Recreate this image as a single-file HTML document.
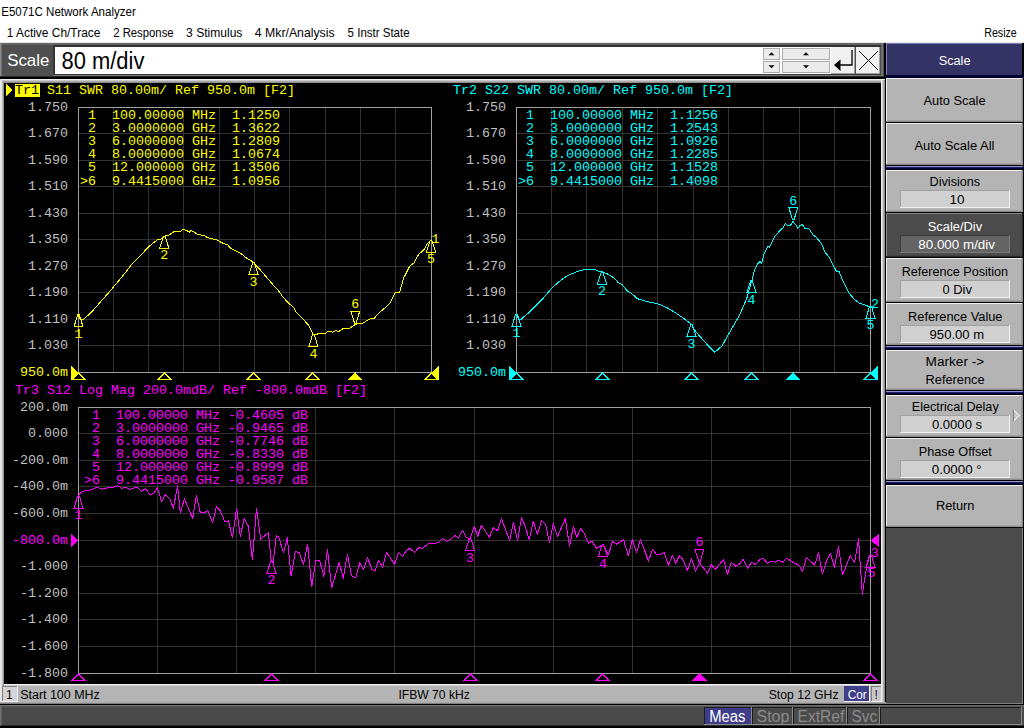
<!DOCTYPE html>
<html><head><meta charset="utf-8"><title>E5071C</title>
<style>
html,body{margin:0;padding:0;width:1024px;height:728px;overflow:hidden;background:#fff;}
svg{display:block;}
text{white-space:pre;}
</style></head><body>
<svg width="1024" height="728" viewBox="0 0 1024 728" shape-rendering="crispEdges">
<rect x="0" y="0" width="1024" height="43" fill="#ffffff" />
<text x="1.2" y="15.7" font-family="'Liberation Sans', sans-serif" font-size="12" fill="#000" text-anchor="start" textLength="134.6" lengthAdjust="spacingAndGlyphs" >E5071C Network Analyzer</text>
<text x="6.7" y="36.6" font-family="'Liberation Sans', sans-serif" font-size="12" fill="#000" text-anchor="start" textLength="93.7" lengthAdjust="spacingAndGlyphs" >1 Active Ch/Trace</text>
<text x="113.2" y="36.6" font-family="'Liberation Sans', sans-serif" font-size="12" fill="#000" text-anchor="start" textLength="60.4" lengthAdjust="spacingAndGlyphs" >2 Response</text>
<text x="186.1" y="36.6" font-family="'Liberation Sans', sans-serif" font-size="12" fill="#000" text-anchor="start" textLength="56.3" lengthAdjust="spacingAndGlyphs" >3 Stimulus</text>
<text x="254.79999999999998" y="36.6" font-family="'Liberation Sans', sans-serif" font-size="12" fill="#000" text-anchor="start" textLength="79.8" lengthAdjust="spacingAndGlyphs" >4 Mkr/Analysis</text>
<text x="347.59999999999997" y="36.6" font-family="'Liberation Sans', sans-serif" font-size="12" fill="#000" text-anchor="start" textLength="62.0" lengthAdjust="spacingAndGlyphs" >5 Instr State</text>
<text x="984.2" y="36.6" font-family="'Liberation Sans', sans-serif" font-size="12" fill="#000" text-anchor="start" textLength="32.6" lengthAdjust="spacingAndGlyphs" >Resize</text>
<rect x="0" y="42" width="1024" height="1" fill="#e6e6e6" />
<rect x="0" y="43" width="885" height="34" fill="#4f4f4f" />
<rect x="0" y="43" width="885" height="1" fill="#686868" />
<rect x="0" y="44" width="885" height="1" fill="#626262" />
<rect x="0" y="43" width="1" height="34" fill="#8a8a8a" />
<rect x="1" y="43" width="1" height="34" fill="#707070" />
<rect x="53" y="45" width="831" height="2" fill="#333333" />
<rect x="53" y="45" width="2" height="30" fill="#333333" />
<rect x="53" y="74" width="831" height="1" fill="#3a3a3a" />
<rect x="53" y="75" width="831" height="1" fill="#7a7a7a" />
<rect x="881" y="45" width="1" height="31" fill="#6a6a6a" />
<rect x="882" y="45" width="1" height="31" fill="#7a7a7a" />
<text x="7.2" y="65.8" font-family="'Liberation Sans', sans-serif" font-size="17" fill="#ffffff" text-anchor="start" textLength="42.2" lengthAdjust="spacingAndGlyphs" >Scale</text>
<rect x="55" y="47" width="776" height="27" fill="#ffffff" />
<text x="61.5" y="69" font-family="'Liberation Sans', sans-serif" font-size="23" fill="#000" text-anchor="start" textLength="82.9" lengthAdjust="spacingAndGlyphs" >80 m/div</text>
<rect x="763.5" y="48.5" width="16" height="10.5" fill="#ebebeb" stroke="#ababab" stroke-width="1"/>
<polygon points="768.5,55.25 774.5,55.25 771.5,52.25" fill="#000" shape-rendering="geometricPrecision"/>
<rect x="763.5" y="61.5" width="16" height="10.5" fill="#ebebeb" stroke="#ababab" stroke-width="1"/>
<polygon points="768.5,65.25 774.5,65.25 771.5,68.25" fill="#000" shape-rendering="geometricPrecision"/>
<rect x="782.5" y="48.5" width="47" height="10.5" fill="#ebebeb" stroke="#ababab" stroke-width="1"/>
<polygon points="803.0,55.25 809.0,55.25 806.0,52.25" fill="#000" shape-rendering="geometricPrecision"/>
<rect x="782.5" y="61.5" width="47" height="10.5" fill="#ebebeb" stroke="#ababab" stroke-width="1"/>
<polygon points="803.0,65.25 809.0,65.25 806.0,68.25" fill="#000" shape-rendering="geometricPrecision"/>
<rect x="831" y="47" width="24" height="27" fill="#f0f0f0" />
<rect x="854" y="47" width="1" height="27" fill="#a0a0a0" />
<rect x="831" y="73" width="24" height="1" fill="#a0a0a0" />
<path d="M852 50 V65 H839" stroke="#000" stroke-width="1.3" fill="none" shape-rendering="geometricPrecision"/>
<polygon points="834,65 840.5,59.5 840.5,71" fill="#000" shape-rendering="geometricPrecision"/>
<rect x="856" y="47" width="24" height="27" fill="#f0f0f0" />
<rect x="879" y="47" width="1" height="27" fill="#a0a0a0" />
<rect x="856" y="73" width="24" height="1" fill="#a0a0a0" />
<path d="M859 51 L878 70 M878 51 L859 70" stroke="#000" stroke-width="1" fill="none" shape-rendering="geometricPrecision"/>
<rect x="0" y="76" width="885" height="1" fill="#2a2a2a" />
<rect x="0" y="77" width="885" height="1" fill="#000000" />
<rect x="0" y="78" width="885" height="1" fill="#000000" />
<rect x="884" y="43" width="1" height="662" fill="#000000" />
<rect x="885" y="43" width="1" height="662" fill="#000000" />
<rect x="0" y="79" width="885" height="626" fill="#b4b4b4" />
<rect x="0" y="79" width="885" height="1" fill="#f0f0f0" />
<rect x="2" y="80" width="883" height="1" fill="#c8c8c8" />
<rect x="3" y="81" width="882" height="1" fill="#a8a8a8" />
<rect x="3" y="82" width="882" height="1" fill="#909090" />
<rect x="0" y="79" width="1" height="625" fill="#e8e8e8" />
<rect x="1" y="79" width="1" height="625" fill="#e0e0e0" />
<rect x="2" y="80" width="1" height="624" fill="#c0c0c0" />
<rect x="3" y="81" width="1" height="623" fill="#909090" />
<rect x="4" y="83" width="877" height="601" fill="#000000" />
<rect x="881" y="80" width="1" height="623" fill="#f0f0f0" />
<rect x="882" y="80" width="1" height="623" fill="#d0d0d0" />
<rect x="883" y="80" width="1" height="623" fill="#b0b0b0" />
<rect x="884" y="80" width="1" height="623" fill="#909090" />
<rect x="4" y="684" width="877" height="1" fill="#f0f0f0" />
<rect x="4" y="685" width="877" height="18" fill="#b4b4b4" />
<rect x="4" y="685" width="877" height="1" fill="#d0d0d0" />
<rect x="0" y="702" width="886" height="1" fill="#a8a8a8" />
<rect x="0" y="703" width="886" height="1" fill="#808080" />
<rect x="0" y="704" width="886" height="1" fill="#000000" />
<rect x="2" y="686" width="15" height="15" fill="#d4d4d4" />
<rect x="2" y="686" width="15" height="1" fill="#808080" />
<rect x="2" y="686" width="1" height="15" fill="#808080" />
<rect x="2" y="701" width="16" height="1" fill="#f0f0f0" />
<rect x="17" y="686" width="1" height="16" fill="#f0f0f0" />
<text x="6" y="698.5" font-family="'Liberation Sans', sans-serif" font-size="12" fill="#000" text-anchor="start" >1</text>
<text x="20.2" y="698.5" font-family="'Liberation Sans', sans-serif" font-size="12" fill="#000" text-anchor="start" textLength="79.6" lengthAdjust="spacingAndGlyphs" >Start 100 MHz</text>
<text x="398.5" y="698.6" font-family="'Liberation Sans', sans-serif" font-size="12" fill="#000" text-anchor="start" textLength="71.3" lengthAdjust="spacingAndGlyphs" >IFBW 70 kHz</text>
<text x="768.7" y="698.6" font-family="'Liberation Sans', sans-serif" font-size="12" fill="#000" text-anchor="start" textLength="69.8" lengthAdjust="spacingAndGlyphs" >Stop 12 GHz</text>
<rect x="844" y="686" width="25" height="15" fill="#3f3f8a" />
<rect x="844" y="701" width="26" height="1" fill="#f0f0f0" />
<rect x="869" y="686" width="1" height="16" fill="#f0f0f0" />
<text x="847.7" y="698.6" font-family="'Liberation Sans', sans-serif" font-size="12" fill="#ffffff" text-anchor="start" textLength="19.1" lengthAdjust="spacingAndGlyphs" >Cor</text>
<rect x="871" y="686" width="11" height="16" fill="#c8c8c8" />
<rect x="871" y="686" width="10" height="1" fill="#808080" />
<rect x="871" y="686" width="1" height="16" fill="#808080" />
<rect x="871" y="701" width="11" height="1" fill="#f0f0f0" />
<rect x="881" y="686" width="1" height="16" fill="#f0f0f0" />
<text x="874.5" y="698.6" font-family="'Liberation Sans', sans-serif" font-size="12" fill="#400040" text-anchor="start" >!</text>
<rect x="0" y="705" width="1024" height="23" fill="#4a4a4a" />
<rect x="0" y="705" width="1024" height="1" fill="#6e6e6e" />
<rect x="0" y="706" width="1024" height="1" fill="#5a5a5a" />
<rect x="0" y="725" width="1024" height="1" fill="#2a2a2a" />
<rect x="0" y="705" width="1" height="21" fill="#6e6e6e" />
<rect x="1" y="706" width="1" height="19" fill="#5e5e5e" />
<rect x="0" y="726" width="1024" height="1" fill="#000000" />
<rect x="0" y="727" width="1024" height="1" fill="#000000" />
<rect x="704" y="707" width="48" height="18" fill="#3d3d8a" />
<rect x="704" y="707" width="48" height="1" fill="#1a1a1a" />
<rect x="704" y="707" width="1" height="18" fill="#1a1a1a" />
<rect x="704" y="724" width="48" height="1" fill="#8a8a8a" />
<rect x="751" y="707" width="1" height="18" fill="#8a8a8a" />
<rect x="752" y="707" width="41" height="18" fill="#4a4a4a" />
<rect x="752" y="707" width="41" height="1" fill="#1a1a1a" />
<rect x="752" y="707" width="1" height="18" fill="#1a1a1a" />
<rect x="752" y="724" width="41" height="1" fill="#8a8a8a" />
<rect x="792" y="707" width="1" height="18" fill="#8a8a8a" />
<rect x="793" y="707" width="54" height="18" fill="#4a4a4a" />
<rect x="793" y="707" width="54" height="1" fill="#1a1a1a" />
<rect x="793" y="707" width="1" height="18" fill="#1a1a1a" />
<rect x="793" y="724" width="54" height="1" fill="#8a8a8a" />
<rect x="846" y="707" width="1" height="18" fill="#8a8a8a" />
<rect x="847" y="707" width="33" height="18" fill="#4a4a4a" />
<rect x="847" y="707" width="33" height="1" fill="#1a1a1a" />
<rect x="847" y="707" width="1" height="18" fill="#1a1a1a" />
<rect x="847" y="724" width="33" height="1" fill="#8a8a8a" />
<rect x="879" y="707" width="1" height="18" fill="#8a8a8a" />
<rect x="880" y="707" width="142" height="18" fill="#4a4a4a" />
<rect x="880" y="707" width="142" height="1" fill="#1a1a1a" />
<rect x="880" y="707" width="1" height="18" fill="#1a1a1a" />
<rect x="880" y="724" width="142" height="1" fill="#8a8a8a" />
<rect x="1021" y="707" width="1" height="18" fill="#8a8a8a" />
<text x="709.2" y="721.7" font-family="'Liberation Sans', sans-serif" font-size="16" fill="#ffffff" text-anchor="start" textLength="36.3" lengthAdjust="spacingAndGlyphs" >Meas</text>
<text x="756.5" y="721.6" font-family="'Liberation Sans', sans-serif" font-size="16" fill="#8a8a8a" text-anchor="start" textLength="32.8" lengthAdjust="spacingAndGlyphs" >Stop</text>
<text x="797.5" y="721.6" font-family="'Liberation Sans', sans-serif" font-size="16" fill="#8a8a8a" text-anchor="start" textLength="46.7" lengthAdjust="spacingAndGlyphs" >ExtRef</text>
<text x="851.5" y="721.6" font-family="'Liberation Sans', sans-serif" font-size="16" fill="#8a8a8a" text-anchor="start" textLength="25.6" lengthAdjust="spacingAndGlyphs" >Svc</text>
<rect x="886" y="43" width="138" height="662" fill="#000000" />
<rect x="886" y="43" width="136" height="32" fill="#333366" />
<rect x="886" y="43" width="136" height="1" fill="#8080b8" />
<rect x="886" y="43" width="1" height="32" fill="#8080b8" />
<rect x="886" y="75" width="138" height="3" fill="#000033" />
<text x="954.6" y="65.1" font-family="'Liberation Sans', sans-serif" font-size="12" fill="#ffffff" text-anchor="middle" textLength="31.9" lengthAdjust="spacingAndGlyphs" >Scale</text>
<rect x="886" y="78" width="137" height="44" fill="#b4b4b4" />
<rect x="886" y="78" width="137" height="1" fill="#f0f0f0" />
<rect x="886" y="78" width="1" height="44" fill="#f0f0f0" />
<rect x="886" y="121" width="137" height="1" fill="#8c8c8c" />
<rect x="887" y="120" width="136" height="1" fill="#a0a0a0" />
<rect x="1022" y="78" width="1" height="44" fill="#8c8c8c" />
<rect x="1021" y="79" width="1" height="43" fill="#a0a0a0" />
<text x="923.5" y="104.7" font-family="'Liberation Sans', sans-serif" font-size="12" fill="#000" text-anchor="start" textLength="62.1" lengthAdjust="spacingAndGlyphs" >Auto Scale</text>
<rect x="886" y="123" width="137" height="42" fill="#b4b4b4" />
<rect x="886" y="123" width="137" height="1" fill="#f0f0f0" />
<rect x="886" y="123" width="1" height="42" fill="#f0f0f0" />
<rect x="886" y="164" width="137" height="1" fill="#8c8c8c" />
<rect x="887" y="163" width="136" height="1" fill="#a0a0a0" />
<rect x="1022" y="123" width="1" height="42" fill="#8c8c8c" />
<rect x="1021" y="124" width="1" height="41" fill="#a0a0a0" />
<text x="914.4000000000001" y="149.9" font-family="'Liberation Sans', sans-serif" font-size="12" fill="#000" text-anchor="start" textLength="80.0" lengthAdjust="spacingAndGlyphs" >Auto Scale All</text>
<rect x="886" y="166" width="137" height="1" fill="#9090d0" />
<rect x="886" y="167" width="137" height="1" fill="#202060" />
<rect x="886" y="168" width="137" height="1" fill="#000040" />
<rect x="886" y="170" width="137" height="42" fill="#b4b4b4" />
<rect x="886" y="170" width="137" height="1" fill="#f0f0f0" />
<rect x="886" y="170" width="1" height="42" fill="#f0f0f0" />
<rect x="886" y="211" width="137" height="1" fill="#8c8c8c" />
<rect x="887" y="210" width="136" height="1" fill="#a0a0a0" />
<rect x="1022" y="170" width="1" height="42" fill="#8c8c8c" />
<rect x="1021" y="171" width="1" height="41" fill="#a0a0a0" />
<text x="929.6" y="186" font-family="'Liberation Sans', sans-serif" font-size="12" fill="#000" text-anchor="start" textLength="50.5" lengthAdjust="spacingAndGlyphs" >Divisions</text>
<rect x="900" y="190" width="110" height="18" fill="#d0d0d0" />
<rect x="900" y="190" width="110" height="1" fill="#a0a0a0" />
<rect x="900" y="190" width="1" height="18" fill="#a0a0a0" />
<rect x="900" y="207" width="110" height="1" fill="#f0f0f0" />
<rect x="1009" y="190" width="1" height="18" fill="#f0f0f0" />
<text x="949.5" y="203.9" font-family="'Liberation Sans', sans-serif" font-size="12" fill="#000" text-anchor="start" textLength="15.0" lengthAdjust="spacingAndGlyphs" >10</text>
<rect x="886" y="213" width="137" height="44" fill="#4b4b4b" />
<rect x="886" y="213" width="137" height="1" fill="#858585" />
<rect x="886" y="213" width="1" height="44" fill="#858585" />
<rect x="886" y="256" width="137" height="1" fill="#2a2a2a" />
<rect x="887" y="255" width="136" height="1" fill="#444" />
<rect x="1022" y="213" width="1" height="44" fill="#2a2a2a" />
<rect x="1021" y="214" width="1" height="43" fill="#444" />
<text x="927.7" y="230.6" font-family="'Liberation Sans', sans-serif" font-size="12" fill="#fff" text-anchor="start" textLength="54.4" lengthAdjust="spacingAndGlyphs" >Scale/Div</text>
<rect x="900" y="235" width="110" height="18" fill="#646464" />
<rect x="900" y="235" width="110" height="1" fill="#3a3a3a" />
<rect x="900" y="235" width="1" height="18" fill="#3a3a3a" />
<rect x="900" y="252" width="110" height="1" fill="#7a7a7a" />
<rect x="1009" y="235" width="1" height="18" fill="#7a7a7a" />
<text x="918.3000000000001" y="248.9" font-family="'Liberation Sans', sans-serif" font-size="12" fill="#fff" text-anchor="start" textLength="76.7" lengthAdjust="spacingAndGlyphs" >80.000 m/div</text>
<rect x="886" y="258" width="137" height="44" fill="#b4b4b4" />
<rect x="886" y="258" width="137" height="1" fill="#f0f0f0" />
<rect x="886" y="258" width="1" height="44" fill="#f0f0f0" />
<rect x="886" y="301" width="137" height="1" fill="#8c8c8c" />
<rect x="887" y="300" width="136" height="1" fill="#a0a0a0" />
<rect x="1022" y="258" width="1" height="44" fill="#8c8c8c" />
<rect x="1021" y="259" width="1" height="43" fill="#a0a0a0" />
<text x="901.7" y="276" font-family="'Liberation Sans', sans-serif" font-size="12" fill="#000" text-anchor="start" textLength="106.4" lengthAdjust="spacingAndGlyphs" >Reference Position</text>
<rect x="900" y="280" width="110" height="18" fill="#d0d0d0" />
<rect x="900" y="280" width="110" height="1" fill="#a0a0a0" />
<rect x="900" y="280" width="1" height="18" fill="#a0a0a0" />
<rect x="900" y="297" width="110" height="1" fill="#f0f0f0" />
<rect x="1009" y="280" width="1" height="18" fill="#f0f0f0" />
<text x="942.5" y="293.9" font-family="'Liberation Sans', sans-serif" font-size="12" fill="#000" text-anchor="start" textLength="29.4" lengthAdjust="spacingAndGlyphs" >0 Div</text>
<rect x="886" y="303" width="137" height="42" fill="#b4b4b4" />
<rect x="886" y="303" width="137" height="1" fill="#f0f0f0" />
<rect x="886" y="303" width="1" height="42" fill="#f0f0f0" />
<rect x="886" y="344" width="137" height="1" fill="#8c8c8c" />
<rect x="887" y="343" width="136" height="1" fill="#a0a0a0" />
<rect x="1022" y="303" width="1" height="42" fill="#8c8c8c" />
<rect x="1021" y="304" width="1" height="41" fill="#a0a0a0" />
<text x="908.0" y="320.6" font-family="'Liberation Sans', sans-serif" font-size="12" fill="#000" text-anchor="start" textLength="94.5" lengthAdjust="spacingAndGlyphs" >Reference Value</text>
<rect x="900" y="325" width="110" height="18" fill="#d0d0d0" />
<rect x="900" y="325" width="110" height="1" fill="#a0a0a0" />
<rect x="900" y="325" width="1" height="18" fill="#a0a0a0" />
<rect x="900" y="342" width="110" height="1" fill="#f0f0f0" />
<rect x="1009" y="325" width="1" height="18" fill="#f0f0f0" />
<text x="929.6" y="338.9" font-family="'Liberation Sans', sans-serif" font-size="12" fill="#000" text-anchor="start" textLength="54.6" lengthAdjust="spacingAndGlyphs" >950.00 m</text>
<rect x="886" y="346" width="137" height="1" fill="#9090d0" />
<rect x="886" y="347" width="137" height="1" fill="#202060" />
<rect x="886" y="348" width="137" height="1" fill="#000040" />
<rect x="886" y="350" width="137" height="40" fill="#b4b4b4" />
<rect x="886" y="350" width="137" height="1" fill="#f0f0f0" />
<rect x="886" y="350" width="1" height="40" fill="#f0f0f0" />
<rect x="886" y="389" width="137" height="1" fill="#8c8c8c" />
<rect x="887" y="388" width="136" height="1" fill="#a0a0a0" />
<rect x="1022" y="350" width="1" height="40" fill="#8c8c8c" />
<rect x="1021" y="351" width="1" height="39" fill="#a0a0a0" />
<text x="925.6" y="366" font-family="'Liberation Sans', sans-serif" font-size="12" fill="#000" text-anchor="start" textLength="58.6" lengthAdjust="spacingAndGlyphs" >Marker -&gt;</text>
<text x="925.6" y="383.9" font-family="'Liberation Sans', sans-serif" font-size="12" fill="#000" text-anchor="start" textLength="59.0" lengthAdjust="spacingAndGlyphs" >Reference</text>
<rect x="886" y="391" width="137" height="1" fill="#9090d0" />
<rect x="886" y="392" width="137" height="1" fill="#202060" />
<rect x="886" y="393" width="137" height="1" fill="#000040" />
<rect x="886" y="395" width="137" height="42" fill="#b4b4b4" />
<rect x="886" y="395" width="137" height="1" fill="#f0f0f0" />
<rect x="886" y="395" width="1" height="42" fill="#f0f0f0" />
<rect x="886" y="436" width="137" height="1" fill="#8c8c8c" />
<rect x="887" y="435" width="136" height="1" fill="#a0a0a0" />
<rect x="1022" y="395" width="1" height="42" fill="#8c8c8c" />
<rect x="1021" y="396" width="1" height="41" fill="#a0a0a0" />
<text x="911.8000000000001" y="410.6" font-family="'Liberation Sans', sans-serif" font-size="12" fill="#000" text-anchor="start" textLength="86.9" lengthAdjust="spacingAndGlyphs" >Electrical Delay</text>
<rect x="900" y="415" width="110" height="18" fill="#d0d0d0" />
<rect x="900" y="415" width="110" height="1" fill="#a0a0a0" />
<rect x="900" y="415" width="1" height="18" fill="#a0a0a0" />
<rect x="900" y="432" width="110" height="1" fill="#f0f0f0" />
<rect x="1009" y="415" width="1" height="18" fill="#f0f0f0" />
<text x="931.9000000000001" y="428.9" font-family="'Liberation Sans', sans-serif" font-size="12" fill="#000" text-anchor="start" textLength="50.2" lengthAdjust="spacingAndGlyphs" >0.0000 s</text>
<rect x="1013" y="410" width="1" height="11" fill="#808080" />
<path d="M1014 410.5 L1019 415.5 L1014 420.5" stroke="#e8e8e8" stroke-width="1" fill="#c4c4c4"/>
<rect x="886" y="438" width="137" height="42" fill="#b4b4b4" />
<rect x="886" y="438" width="137" height="1" fill="#f0f0f0" />
<rect x="886" y="438" width="1" height="42" fill="#f0f0f0" />
<rect x="886" y="479" width="137" height="1" fill="#8c8c8c" />
<rect x="887" y="478" width="136" height="1" fill="#a0a0a0" />
<rect x="1022" y="438" width="1" height="42" fill="#8c8c8c" />
<rect x="1021" y="439" width="1" height="41" fill="#a0a0a0" />
<text x="918.8000000000001" y="456" font-family="'Liberation Sans', sans-serif" font-size="12" fill="#000" text-anchor="start" textLength="73.1" lengthAdjust="spacingAndGlyphs" >Phase Offset</text>
<rect x="900" y="460" width="110" height="18" fill="#d0d0d0" />
<rect x="900" y="460" width="110" height="1" fill="#a0a0a0" />
<rect x="900" y="460" width="1" height="18" fill="#a0a0a0" />
<rect x="900" y="477" width="110" height="1" fill="#f0f0f0" />
<rect x="1009" y="460" width="1" height="18" fill="#f0f0f0" />
<text x="931.8000000000001" y="473.8" font-family="'Liberation Sans', sans-serif" font-size="12" fill="#000" text-anchor="start" textLength="49.9" lengthAdjust="spacingAndGlyphs" >0.0000 °</text>
<rect x="886" y="481" width="137" height="1" fill="#9090d0" />
<rect x="886" y="482" width="137" height="1" fill="#202060" />
<rect x="886" y="483" width="137" height="1" fill="#000040" />
<rect x="886" y="485" width="137" height="42" fill="#b4b4b4" />
<rect x="886" y="485" width="137" height="1" fill="#f0f0f0" />
<rect x="886" y="485" width="1" height="42" fill="#f0f0f0" />
<rect x="886" y="526" width="137" height="1" fill="#8c8c8c" />
<rect x="887" y="525" width="136" height="1" fill="#a0a0a0" />
<rect x="1022" y="485" width="1" height="42" fill="#8c8c8c" />
<rect x="1021" y="486" width="1" height="41" fill="#a0a0a0" />
<text x="935.9000000000001" y="509.8" font-family="'Liberation Sans', sans-serif" font-size="12" fill="#000" text-anchor="start" textLength="38.6" lengthAdjust="spacingAndGlyphs" >Return</text>
<rect x="886" y="528" width="137" height="176" fill="#4b4b4b" />
<rect x="886" y="703" width="137" height="1" fill="#808080" />
<rect x="1022" y="528" width="1" height="176" fill="#808080" />
<rect x="113" y="107" width="1" height="266" fill="#333333" />
<rect x="148" y="107" width="1" height="266" fill="#333333" />
<rect x="183" y="107" width="1" height="266" fill="#333333" />
<rect x="219" y="107" width="1" height="266" fill="#333333" />
<rect x="254" y="107" width="1" height="266" fill="#333333" />
<rect x="289" y="107" width="1" height="266" fill="#333333" />
<rect x="325" y="107" width="1" height="266" fill="#333333" />
<rect x="360" y="107" width="1" height="266" fill="#333333" />
<rect x="395" y="107" width="1" height="266" fill="#333333" />
<rect x="78" y="133" width="354" height="1" fill="#333333" />
<rect x="78" y="160" width="354" height="1" fill="#333333" />
<rect x="78" y="186" width="354" height="1" fill="#333333" />
<rect x="78" y="213" width="354" height="1" fill="#333333" />
<rect x="78" y="239" width="354" height="1" fill="#333333" />
<rect x="78" y="266" width="354" height="1" fill="#333333" />
<rect x="78" y="292" width="354" height="1" fill="#333333" />
<rect x="78" y="319" width="354" height="1" fill="#333333" />
<rect x="78" y="345" width="354" height="1" fill="#333333" />
<rect x="78" y="107" width="354" height="1" fill="#a0a0a0" />
<rect x="78" y="372" width="354" height="1" fill="#a0a0a0" />
<rect x="78" y="107" width="1" height="266" fill="#a0a0a0" />
<rect x="431" y="107" width="1" height="266" fill="#a0a0a0" />
<rect x="551" y="107" width="1" height="266" fill="#333333" />
<rect x="586" y="107" width="1" height="266" fill="#333333" />
<rect x="622" y="107" width="1" height="266" fill="#333333" />
<rect x="657" y="107" width="1" height="266" fill="#333333" />
<rect x="693" y="107" width="1" height="266" fill="#333333" />
<rect x="728" y="107" width="1" height="266" fill="#333333" />
<rect x="763" y="107" width="1" height="266" fill="#333333" />
<rect x="799" y="107" width="1" height="266" fill="#333333" />
<rect x="834" y="107" width="1" height="266" fill="#333333" />
<rect x="516" y="133" width="355" height="1" fill="#333333" />
<rect x="516" y="160" width="355" height="1" fill="#333333" />
<rect x="516" y="186" width="355" height="1" fill="#333333" />
<rect x="516" y="213" width="355" height="1" fill="#333333" />
<rect x="516" y="239" width="355" height="1" fill="#333333" />
<rect x="516" y="266" width="355" height="1" fill="#333333" />
<rect x="516" y="292" width="355" height="1" fill="#333333" />
<rect x="516" y="319" width="355" height="1" fill="#333333" />
<rect x="516" y="345" width="355" height="1" fill="#333333" />
<rect x="516" y="107" width="355" height="1" fill="#a0a0a0" />
<rect x="516" y="372" width="355" height="1" fill="#a0a0a0" />
<rect x="516" y="107" width="1" height="266" fill="#a0a0a0" />
<rect x="870" y="107" width="1" height="266" fill="#a0a0a0" />
<rect x="157" y="407" width="1" height="267" fill="#333333" />
<rect x="236" y="407" width="1" height="267" fill="#333333" />
<rect x="315" y="407" width="1" height="267" fill="#333333" />
<rect x="394" y="407" width="1" height="267" fill="#333333" />
<rect x="474" y="407" width="1" height="267" fill="#333333" />
<rect x="553" y="407" width="1" height="267" fill="#333333" />
<rect x="632" y="407" width="1" height="267" fill="#333333" />
<rect x="711" y="407" width="1" height="267" fill="#333333" />
<rect x="790" y="407" width="1" height="267" fill="#333333" />
<rect x="78" y="433" width="793" height="1" fill="#333333" />
<rect x="78" y="460" width="793" height="1" fill="#333333" />
<rect x="78" y="486" width="793" height="1" fill="#333333" />
<rect x="78" y="513" width="793" height="1" fill="#333333" />
<rect x="78" y="540" width="793" height="1" fill="#333333" />
<rect x="78" y="566" width="793" height="1" fill="#333333" />
<rect x="78" y="593" width="793" height="1" fill="#333333" />
<rect x="78" y="619" width="793" height="1" fill="#333333" />
<rect x="78" y="646" width="793" height="1" fill="#333333" />
<rect x="78" y="407" width="793" height="1" fill="#a0a0a0" />
<rect x="78" y="673" width="793" height="1" fill="#a0a0a0" />
<rect x="78" y="407" width="1" height="267" fill="#a0a0a0" />
<rect x="870" y="407" width="1" height="267" fill="#a0a0a0" />
<rect x="15" y="84" width="25" height="13" fill="#ffff00" />
<text x="15" y="94" font-family="'Liberation Mono', monospace" font-size="13.33" fill="#000" text-anchor="start" xml:space="preserve">Tr1</text>
<text x="15" y="94" font-family="'Liberation Mono', monospace" font-size="13.33" fill="#ffff00" text-anchor="start" xml:space="preserve">    S11 SWR 80.00m/ Ref 950.0m [F2]</text>
<polygon points="6,84 12.5,90 6,96" fill="#ffff00"/>
<text x="28" y="110.5" font-family="'Liberation Mono', monospace" font-size="13.33" fill="#c0c0c0" text-anchor="start" xml:space="preserve">1.750</text>
<text x="28" y="137.0" font-family="'Liberation Mono', monospace" font-size="13.33" fill="#c0c0c0" text-anchor="start" xml:space="preserve">1.670</text>
<text x="28" y="163.5" font-family="'Liberation Mono', monospace" font-size="13.33" fill="#c0c0c0" text-anchor="start" xml:space="preserve">1.590</text>
<text x="28" y="190.0" font-family="'Liberation Mono', monospace" font-size="13.33" fill="#c0c0c0" text-anchor="start" xml:space="preserve">1.510</text>
<text x="28" y="216.5" font-family="'Liberation Mono', monospace" font-size="13.33" fill="#c0c0c0" text-anchor="start" xml:space="preserve">1.430</text>
<text x="28" y="243.0" font-family="'Liberation Mono', monospace" font-size="13.33" fill="#c0c0c0" text-anchor="start" xml:space="preserve">1.350</text>
<text x="28" y="269.5" font-family="'Liberation Mono', monospace" font-size="13.33" fill="#c0c0c0" text-anchor="start" xml:space="preserve">1.270</text>
<text x="28" y="296.0" font-family="'Liberation Mono', monospace" font-size="13.33" fill="#c0c0c0" text-anchor="start" xml:space="preserve">1.190</text>
<text x="28" y="322.5" font-family="'Liberation Mono', monospace" font-size="13.33" fill="#c0c0c0" text-anchor="start" xml:space="preserve">1.110</text>
<text x="28" y="349.0" font-family="'Liberation Mono', monospace" font-size="13.33" fill="#c0c0c0" text-anchor="start" xml:space="preserve">1.030</text>
<text x="20" y="375.5" font-family="'Liberation Mono', monospace" font-size="13.33" fill="#ffff00" text-anchor="start" xml:space="preserve">950.0m</text>
<text x="453" y="94" font-family="'Liberation Mono', monospace" font-size="13.33" fill="#00ffff" text-anchor="start" xml:space="preserve">Tr2 S22 SWR 80.00m/ Ref 950.0m [F2]</text>
<text x="466" y="110.5" font-family="'Liberation Mono', monospace" font-size="13.33" fill="#c0c0c0" text-anchor="start" xml:space="preserve">1.750</text>
<text x="466" y="137.0" font-family="'Liberation Mono', monospace" font-size="13.33" fill="#c0c0c0" text-anchor="start" xml:space="preserve">1.670</text>
<text x="466" y="163.5" font-family="'Liberation Mono', monospace" font-size="13.33" fill="#c0c0c0" text-anchor="start" xml:space="preserve">1.590</text>
<text x="466" y="190.0" font-family="'Liberation Mono', monospace" font-size="13.33" fill="#c0c0c0" text-anchor="start" xml:space="preserve">1.510</text>
<text x="466" y="216.5" font-family="'Liberation Mono', monospace" font-size="13.33" fill="#c0c0c0" text-anchor="start" xml:space="preserve">1.430</text>
<text x="466" y="243.0" font-family="'Liberation Mono', monospace" font-size="13.33" fill="#c0c0c0" text-anchor="start" xml:space="preserve">1.350</text>
<text x="466" y="269.5" font-family="'Liberation Mono', monospace" font-size="13.33" fill="#c0c0c0" text-anchor="start" xml:space="preserve">1.270</text>
<text x="466" y="296.0" font-family="'Liberation Mono', monospace" font-size="13.33" fill="#c0c0c0" text-anchor="start" xml:space="preserve">1.190</text>
<text x="466" y="322.5" font-family="'Liberation Mono', monospace" font-size="13.33" fill="#c0c0c0" text-anchor="start" xml:space="preserve">1.110</text>
<text x="466" y="349.0" font-family="'Liberation Mono', monospace" font-size="13.33" fill="#c0c0c0" text-anchor="start" xml:space="preserve">1.030</text>
<text x="458" y="375.5" font-family="'Liberation Mono', monospace" font-size="13.33" fill="#00ffff" text-anchor="start" xml:space="preserve">950.0m</text>
<text x="15" y="394" font-family="'Liberation Mono', monospace" font-size="13.33" fill="#ff00ff" text-anchor="start" xml:space="preserve">Tr3 S12 Log Mag 200.0mdB/ Ref -800.0mdB [F2]</text>
<text x="20" y="410.5" font-family="'Liberation Mono', monospace" font-size="13.33" fill="#c0c0c0" text-anchor="start" xml:space="preserve">200.0m</text>
<text x="28" y="437.1" font-family="'Liberation Mono', monospace" font-size="13.33" fill="#c0c0c0" text-anchor="start" xml:space="preserve">0.000</text>
<text x="12" y="463.7" font-family="'Liberation Mono', monospace" font-size="13.33" fill="#c0c0c0" text-anchor="start" xml:space="preserve">-200.0m</text>
<text x="12" y="490.3" font-family="'Liberation Mono', monospace" font-size="13.33" fill="#c0c0c0" text-anchor="start" xml:space="preserve">-400.0m</text>
<text x="12" y="516.9" font-family="'Liberation Mono', monospace" font-size="13.33" fill="#c0c0c0" text-anchor="start" xml:space="preserve">-600.0m</text>
<text x="12" y="543.5" font-family="'Liberation Mono', monospace" font-size="13.33" fill="#ff00ff" text-anchor="start" xml:space="preserve">-800.0m</text>
<text x="20" y="570.1" font-family="'Liberation Mono', monospace" font-size="13.33" fill="#c0c0c0" text-anchor="start" xml:space="preserve">-1.000</text>
<text x="20" y="596.7" font-family="'Liberation Mono', monospace" font-size="13.33" fill="#c0c0c0" text-anchor="start" xml:space="preserve">-1.200</text>
<text x="20" y="623.3" font-family="'Liberation Mono', monospace" font-size="13.33" fill="#c0c0c0" text-anchor="start" xml:space="preserve">-1.400</text>
<text x="20" y="649.9" font-family="'Liberation Mono', monospace" font-size="13.33" fill="#c0c0c0" text-anchor="start" xml:space="preserve">-1.600</text>
<text x="20" y="676.5" font-family="'Liberation Mono', monospace" font-size="13.33" fill="#c0c0c0" text-anchor="start" xml:space="preserve">-1.800</text>
<text x="80" y="118.5" font-family="'Liberation Mono', monospace" font-size="13.33" fill="#ffff00" text-anchor="start" xml:space="preserve"> 1  100.00000 MHz  1.1250</text>
<text x="80" y="131.7" font-family="'Liberation Mono', monospace" font-size="13.33" fill="#ffff00" text-anchor="start" xml:space="preserve"> 2  3.0000000 GHz  1.3622</text>
<text x="80" y="144.9" font-family="'Liberation Mono', monospace" font-size="13.33" fill="#ffff00" text-anchor="start" xml:space="preserve"> 3  6.0000000 GHz  1.2809</text>
<text x="80" y="158.1" font-family="'Liberation Mono', monospace" font-size="13.33" fill="#ffff00" text-anchor="start" xml:space="preserve"> 4  8.0000000 GHz  1.0674</text>
<text x="80" y="171.3" font-family="'Liberation Mono', monospace" font-size="13.33" fill="#ffff00" text-anchor="start" xml:space="preserve"> 5  12.000000 GHz  1.3506</text>
<text x="80" y="184.5" font-family="'Liberation Mono', monospace" font-size="13.33" fill="#ffff00" text-anchor="start" xml:space="preserve">&gt;6  9.4415000 GHz  1.0956</text>
<text x="518" y="118.5" font-family="'Liberation Mono', monospace" font-size="13.33" fill="#00ffff" text-anchor="start" xml:space="preserve"> 1  100.00000 MHz  1.1256</text>
<text x="518" y="131.7" font-family="'Liberation Mono', monospace" font-size="13.33" fill="#00ffff" text-anchor="start" xml:space="preserve"> 2  3.0000000 GHz  1.2543</text>
<text x="518" y="144.9" font-family="'Liberation Mono', monospace" font-size="13.33" fill="#00ffff" text-anchor="start" xml:space="preserve"> 3  6.0000000 GHz  1.0926</text>
<text x="518" y="158.1" font-family="'Liberation Mono', monospace" font-size="13.33" fill="#00ffff" text-anchor="start" xml:space="preserve"> 4  8.0000000 GHz  1.2285</text>
<text x="518" y="171.3" font-family="'Liberation Mono', monospace" font-size="13.33" fill="#00ffff" text-anchor="start" xml:space="preserve"> 5  12.000000 GHz  1.1528</text>
<text x="518" y="184.5" font-family="'Liberation Mono', monospace" font-size="13.33" fill="#00ffff" text-anchor="start" xml:space="preserve">&gt;6  9.4415000 GHz  1.4098</text>
<text x="84" y="419.2" font-family="'Liberation Mono', monospace" font-size="13.33" fill="#ff00ff" text-anchor="start" xml:space="preserve"> 1  100.00000 MHz -0.4605 dB</text>
<text x="84" y="432.09999999999997" font-family="'Liberation Mono', monospace" font-size="13.33" fill="#ff00ff" text-anchor="start" xml:space="preserve"> 2  3.0000000 GHz -0.9465 dB</text>
<text x="84" y="445.0" font-family="'Liberation Mono', monospace" font-size="13.33" fill="#ff00ff" text-anchor="start" xml:space="preserve"> 3  6.0000000 GHz -0.7746 dB</text>
<text x="84" y="457.9" font-family="'Liberation Mono', monospace" font-size="13.33" fill="#ff00ff" text-anchor="start" xml:space="preserve"> 4  8.0000000 GHz -0.8330 dB</text>
<text x="84" y="470.8" font-family="'Liberation Mono', monospace" font-size="13.33" fill="#ff00ff" text-anchor="start" xml:space="preserve"> 5  12.000000 GHz -0.8999 dB</text>
<text x="84" y="483.7" font-family="'Liberation Mono', monospace" font-size="13.33" fill="#ff00ff" text-anchor="start" xml:space="preserve">&gt;6  9.4415000 GHz -0.9587 dB</text>
<g fill="none" stroke-width="1" stroke-linejoin="round">
<polyline points="78.2,314.7 79.9,318.8 83.2,319.7 91.4,312.3 103.0,299.0 109.5,291.7 122.7,276.0 131.0,265.3 149.1,246.4 157.3,239.8 160.0,239.7 164.1,236.1 168.2,235.6 174.4,231.5 180.6,231.3 182.7,229.4 186.8,230.4 189.4,232.5 190.9,230.4 197.1,234.0 205.3,236.1 207.4,237.5 217.7,240.2 221.8,242.8 228.0,244.9 230.0,247.8 238.3,252.1 242.4,254.6 245.5,257.4 250.6,260.3 253.2,262.4 255.0,264.1 261.9,271.7 272.9,284.7 277.0,288.8 282.5,296.4 288.0,302.6 293.5,307.4 296.2,312.2 303.1,319.1 308.6,325.2 313.4,334.9 316.8,334.2 319.6,333.5 325.1,333.5 327.8,331.4 332.6,332.1 336.0,330.7 338.8,331.4 342.9,328.7 349.8,328.0 355.1,324.7 358.1,323.2 362.7,323.2 370.2,318.7 374.0,318.7 377.8,314.1 383.8,308.8 389.8,303.5 395.1,293.0 399.7,292.2 403.4,278.6 409.5,266.5 414.0,262.8 418.5,254.5 424.6,249.2 427.6,243.1 431.4,240.1" stroke="#ffff00"/>
<polyline points="516.5,314.0 518.6,319.3 521.0,319.3 529.7,311.9 535.9,305.7 542.1,299.5 553.2,286.5 555.7,284.7 560.6,280.3 568.0,275.4 576.7,271.7 584.1,269.6 591.5,269.6 595.2,269.8 598.9,271.3 601.9,271.7 608.0,274.2 614.8,278.5 618.5,282.9 622.2,284.7 627.2,290.9 630.9,292.8 637.1,298.6 644.5,300.8 651.9,302.6 659.3,304.3 666.7,307.6 674.2,311.9 681.6,316.9 691.5,324.3 694.1,329.6 700.3,336.8 707.5,345.0 714.7,352.3 722.0,346.0 731.2,329.6 739.5,315.2 746.7,298.7 751.9,280.1 755.0,268.8 758.0,263.6 760.1,261.5 761.8,263.2 764.2,253.3 768.0,246.0 769.4,247.5 774.5,236.8 780.7,229.6 782.7,228.2 785.7,223.2 787.1,225.4 790.4,225.4 792.9,221.4 795.2,224.1 797.9,228.2 799.6,225.9 802.3,224.1 804.6,228.2 808.6,228.2 813.0,234.8 816.6,237.5 822.0,244.6 824.6,251.8 829.1,257.1 833.6,266.0 836.3,271.0 839.0,271.4 843.4,282.1 848.8,292.9 855.0,300.0 859.5,303.2 865.7,305.4 870.7,307.1" stroke="#00ffff"/>
<polyline points="78.4,495.2 81.2,492.4 85.3,490.6 90.1,490.1 97.0,487.3 102.5,489.3 108.0,487.6 113.5,487.3 117.6,485.6 121.7,488.3 125.8,487.6 130.0,489.3 134.0,487.9 137.5,487.3 141.6,491.5 145.7,488.3 149.9,495.2 154.0,493.1 157.4,487.6 161.5,501.4 165.7,494.5 169.8,498.6 173.4,508.2 177.6,485.6 180.3,513.0 184.4,498.6 192.7,518.5 196.4,495.6 200.2,512.3 205.0,512.3 207.8,510.7 212.6,522.6 216.4,506.8 220.1,510.7 224.9,521.7 228.4,520.9 232.5,537.8 236.6,508.2 240.3,536.4 244.2,518.5 248.3,526.1 252.4,559.7 256.5,508.2 260.7,539.1 268.4,532.7 271.2,560.4 273.2,562.5 276.3,535.4 278.7,536.8 283.5,552.9 287.3,537.4 291.1,576.2 295.2,551.5 299.3,552.9 303.5,564.6 307.6,544.2 311.7,586.5 315.8,560.4 319.7,560.4 323.8,576.2 327.5,549.5 331.6,587.9 339.2,562.5 343.3,578.3 347.4,554.3 351.5,575.5 355.7,578.0 359.8,562.5 363.4,569.4 367.6,557.4 371.7,569.4 375.1,570.7 378.5,560.4 382.7,567.3 386.4,552.5 390.2,557.4 394.3,564.6 398.5,552.5 402.6,556.3 406.7,550.1 409.7,548.4 414.7,552.5 418.8,547.4 422.5,548.4 428.7,543.7 434.9,543.3 439.0,541.9 442.4,538.5 446.5,541.2 450.7,539.1 454.8,535.4 458.4,538.2 462.6,530.2 466.0,537.1 470.1,539.1 474.2,526.1 477.7,536.4 481.4,525.4 489.3,537.1 493.5,527.5 497.6,530.9 501.4,518.5 509.7,540.5 513.4,522.3 517.5,540.5 521.6,517.6 525.1,526.1 529.2,539.8 533.3,521.3 537.4,534.3 541.5,520.6 545.7,524.7 549.5,542.6 553.3,523.6 557.6,536.4 565.4,518.5 569.5,546.7 573.4,526.1 576.8,537.4 580.5,528.6 584.3,533.7 588.5,543.3 591.9,541.2 596.7,548.4 602.9,544.6 608.4,554.9 612.5,541.2 616.6,544.2 623.5,539.6 628.3,555.6 632.4,539.6 636.5,552.5 640.4,539.8 644.5,550.0 648.3,561.2 652.5,549.5 656.5,554.3 660.4,554.3 664.2,552.4 668.3,565.1 672.5,555.4 675.5,563.4 679.6,555.4 683.5,560.7 687.3,570.5 691.7,558.5 695.5,571.4 699.4,562.9 702.1,566.2 707.6,573.3 711.5,564.5 715.3,569.5 723.6,559.6 727.4,574.4 731.3,562.3 735.7,566.2 739.5,564.0 743.3,559.3 747.5,568.4 751.5,562.3 755.4,564.5 760.3,559.3 763.1,558.2 767.5,563.4 771.3,561.2 774.6,562.3 778.5,560.4 782.3,562.3 787.0,558.2 794.4,563.4 798.2,564.5 802.6,571.4 806.5,557.4 814.7,565.3 818.6,552.4 822.3,574.0 826.8,560.1 830.5,553.4 834.4,567.4 838.5,546.4 842.5,574.9 850.2,555.7 854.6,562.9 858.5,538.5 862.3,594.2 866.7,566.2 870.0,555.0" stroke="#ff00ff"/>
</g>
<polygon points="77.7,314.7 79.3,314.7 83.0,326.7 74.0,326.7" fill="none" stroke="#ffff00" stroke-width="1"/>
<text x="78.5" y="337.9" font-family="'Liberation Mono', monospace" font-size="13.33" fill="#ffff00" text-anchor="middle" >1</text>
<polygon points="163.5,236 165.10000000000002,236 168.8,248 159.8,248" fill="none" stroke="#ffff00" stroke-width="1"/>
<text x="164.3" y="259.2" font-family="'Liberation Mono', monospace" font-size="13.33" fill="#ffff00" text-anchor="middle" >2</text>
<polygon points="252.7,262.5 254.3,262.5 258.0,274.5 249.0,274.5" fill="none" stroke="#ffff00" stroke-width="1"/>
<text x="253.5" y="285.7" font-family="'Liberation Mono', monospace" font-size="13.33" fill="#ffff00" text-anchor="middle" >3</text>
<polygon points="312.59999999999997,334.5 314.2,334.5 317.9,346.5 308.9,346.5" fill="none" stroke="#ffff00" stroke-width="1"/>
<text x="313.4" y="357.7" font-family="'Liberation Mono', monospace" font-size="13.33" fill="#ffff00" text-anchor="middle" >4</text>
<polygon points="354.5,323 356.1,323 359.8,311 350.8,311" fill="none" stroke="#ffff00" stroke-width="1"/>
<text x="355.3" y="308" font-family="'Liberation Mono', monospace" font-size="13.33" fill="#ffff00" text-anchor="middle" >6</text>
<polygon points="430.2,240 431.8,240 435.5,252 426.5,252" fill="none" stroke="#ffff00" stroke-width="1"/>
<text x="431" y="263.2" font-family="'Liberation Mono', monospace" font-size="13.33" fill="#ffff00" text-anchor="middle" >5</text>
<text x="435.5" y="243" font-family="'Liberation Mono', monospace" font-size="13.33" fill="#ffff00" text-anchor="middle" >1</text>
<polygon points="78.5,373 72.5,379 84.5,379" fill="none" stroke="#ffff00" stroke-width="1"/>
<polygon points="164.5,373 158.5,379 170.5,379" fill="none" stroke="#ffff00" stroke-width="1"/>
<polygon points="253.5,373 247.5,379 259.5,379" fill="none" stroke="#ffff00" stroke-width="1"/>
<polygon points="312.5,373 306.5,379 318.5,379" fill="none" stroke="#ffff00" stroke-width="1"/>
<polygon points="431.5,373 425.5,379 437.5,379" fill="none" stroke="#ffff00" stroke-width="1"/>
<polygon points="355.3,373 349.3,379 361.3,379" fill="#ffff00" stroke="#ffff00" stroke-width="1"/>
<polygon points="71,366 78.5,372.5 71,379" fill="#ffff00"/>
<polygon points="439,366 431.5,372.5 439,379" fill="#ffff00"/>
<polygon points="515.7,314 517.3,314 521.0,326 512.0,326" fill="none" stroke="#00ffff" stroke-width="1"/>
<text x="516.5" y="337.2" font-family="'Liberation Mono', monospace" font-size="13.33" fill="#00ffff" text-anchor="middle" >1</text>
<polygon points="601.2,272 602.8,272 606.5,284 597.5,284" fill="none" stroke="#00ffff" stroke-width="1"/>
<text x="602" y="295.2" font-family="'Liberation Mono', monospace" font-size="13.33" fill="#00ffff" text-anchor="middle" >2</text>
<polygon points="690.7,324.5 692.3,324.5 696.0,336.5 687.0,336.5" fill="none" stroke="#00ffff" stroke-width="1"/>
<text x="691.5" y="347.7" font-family="'Liberation Mono', monospace" font-size="13.33" fill="#00ffff" text-anchor="middle" >3</text>
<polygon points="750.7,280.5 752.3,280.5 756.0,292.5 747.0,292.5" fill="none" stroke="#00ffff" stroke-width="1"/>
<text x="751.5" y="303.7" font-family="'Liberation Mono', monospace" font-size="13.33" fill="#00ffff" text-anchor="middle" >4</text>
<polygon points="792.5,219.5 794.0999999999999,219.5 797.8,207.5 788.8,207.5" fill="none" stroke="#00ffff" stroke-width="1"/>
<text x="793.3" y="204.5" font-family="'Liberation Mono', monospace" font-size="13.33" fill="#00ffff" text-anchor="middle" >6</text>
<polygon points="869.7,306 871.3,306 875.0,318 866.0,318" fill="none" stroke="#00ffff" stroke-width="1"/>
<text x="870.5" y="329.2" font-family="'Liberation Mono', monospace" font-size="13.33" fill="#00ffff" text-anchor="middle" >5</text>
<text x="875" y="307.5" font-family="'Liberation Mono', monospace" font-size="13.33" fill="#00ffff" text-anchor="middle" >2</text>
<polygon points="516.5,373 510.5,379 522.5,379" fill="none" stroke="#00ffff" stroke-width="1"/>
<polygon points="602.5,373 596.5,379 608.5,379" fill="none" stroke="#00ffff" stroke-width="1"/>
<polygon points="691.5,373 685.5,379 697.5,379" fill="none" stroke="#00ffff" stroke-width="1"/>
<polygon points="751.5,373 745.5,379 757.5,379" fill="none" stroke="#00ffff" stroke-width="1"/>
<polygon points="870.5,373 864.5,379 876.5,379" fill="none" stroke="#00ffff" stroke-width="1"/>
<polygon points="793.3,373 787.3,379 799.3,379" fill="#00ffff" stroke="#00ffff" stroke-width="1"/>
<polygon points="509,366 516.5,372.5 509,379" fill="#00ffff"/>
<polygon points="878,366 870.5,372.5 878,379" fill="#00ffff"/>
<polygon points="77.7,496 79.3,496 83.0,508 74.0,508" fill="none" stroke="#ff00ff" stroke-width="1"/>
<text x="78.5" y="519.2" font-family="'Liberation Mono', monospace" font-size="13.33" fill="#ff00ff" text-anchor="middle" >1</text>
<polygon points="270.7,561 272.3,561 276.0,573 267.0,573" fill="none" stroke="#ff00ff" stroke-width="1"/>
<text x="271.5" y="584.2" font-family="'Liberation Mono', monospace" font-size="13.33" fill="#ff00ff" text-anchor="middle" >2</text>
<polygon points="469.3,538.5 470.90000000000003,538.5 474.6,550.5 465.6,550.5" fill="none" stroke="#ff00ff" stroke-width="1"/>
<text x="470.1" y="561.7" font-family="'Liberation Mono', monospace" font-size="13.33" fill="#ff00ff" text-anchor="middle" >3</text>
<polygon points="602.1,544.6 603.6999999999999,544.6 607.4,556.6 598.4,556.6" fill="none" stroke="#ff00ff" stroke-width="1"/>
<text x="602.9" y="567.8000000000001" font-family="'Liberation Mono', monospace" font-size="13.33" fill="#ff00ff" text-anchor="middle" >4</text>
<polygon points="698.6,561.2 700.1999999999999,561.2 703.9,549.2 694.9,549.2" fill="none" stroke="#ff00ff" stroke-width="1"/>
<text x="699.4" y="546.2" font-family="'Liberation Mono', monospace" font-size="13.33" fill="#ff00ff" text-anchor="middle" >6</text>
<polygon points="869.7,555 871.3,555 875.0,567 866.0,567" fill="none" stroke="#ff00ff" stroke-width="1"/>
<text x="871.4" y="577" font-family="'Liberation Mono', monospace" font-size="13.33" fill="#ff00ff" text-anchor="middle" >5</text>
<text x="874.7" y="557.3" font-family="'Liberation Mono', monospace" font-size="13.33" fill="#ff00ff" text-anchor="middle" >3</text>
<polygon points="78.5,674 72.5,680 84.5,680" fill="none" stroke="#ff00ff" stroke-width="1"/>
<polygon points="271.5,674 265.5,680 277.5,680" fill="none" stroke="#ff00ff" stroke-width="1"/>
<polygon points="470.5,674 464.5,680 476.5,680" fill="none" stroke="#ff00ff" stroke-width="1"/>
<polygon points="602.5,674 596.5,680 608.5,680" fill="none" stroke="#ff00ff" stroke-width="1"/>
<polygon points="870.5,674 864.5,680 876.5,680" fill="none" stroke="#ff00ff" stroke-width="1"/>
<polygon points="699.5,674 693.5,680 705.5,680" fill="#ff00ff" stroke="#ff00ff" stroke-width="1"/>
<polygon points="71,534 78.5,540.5 71,547" fill="#ff00ff"/>
<polygon points="878.5,534 871,540.5 878.5,547" fill="#ff00ff"/>
</svg>
</body></html>
